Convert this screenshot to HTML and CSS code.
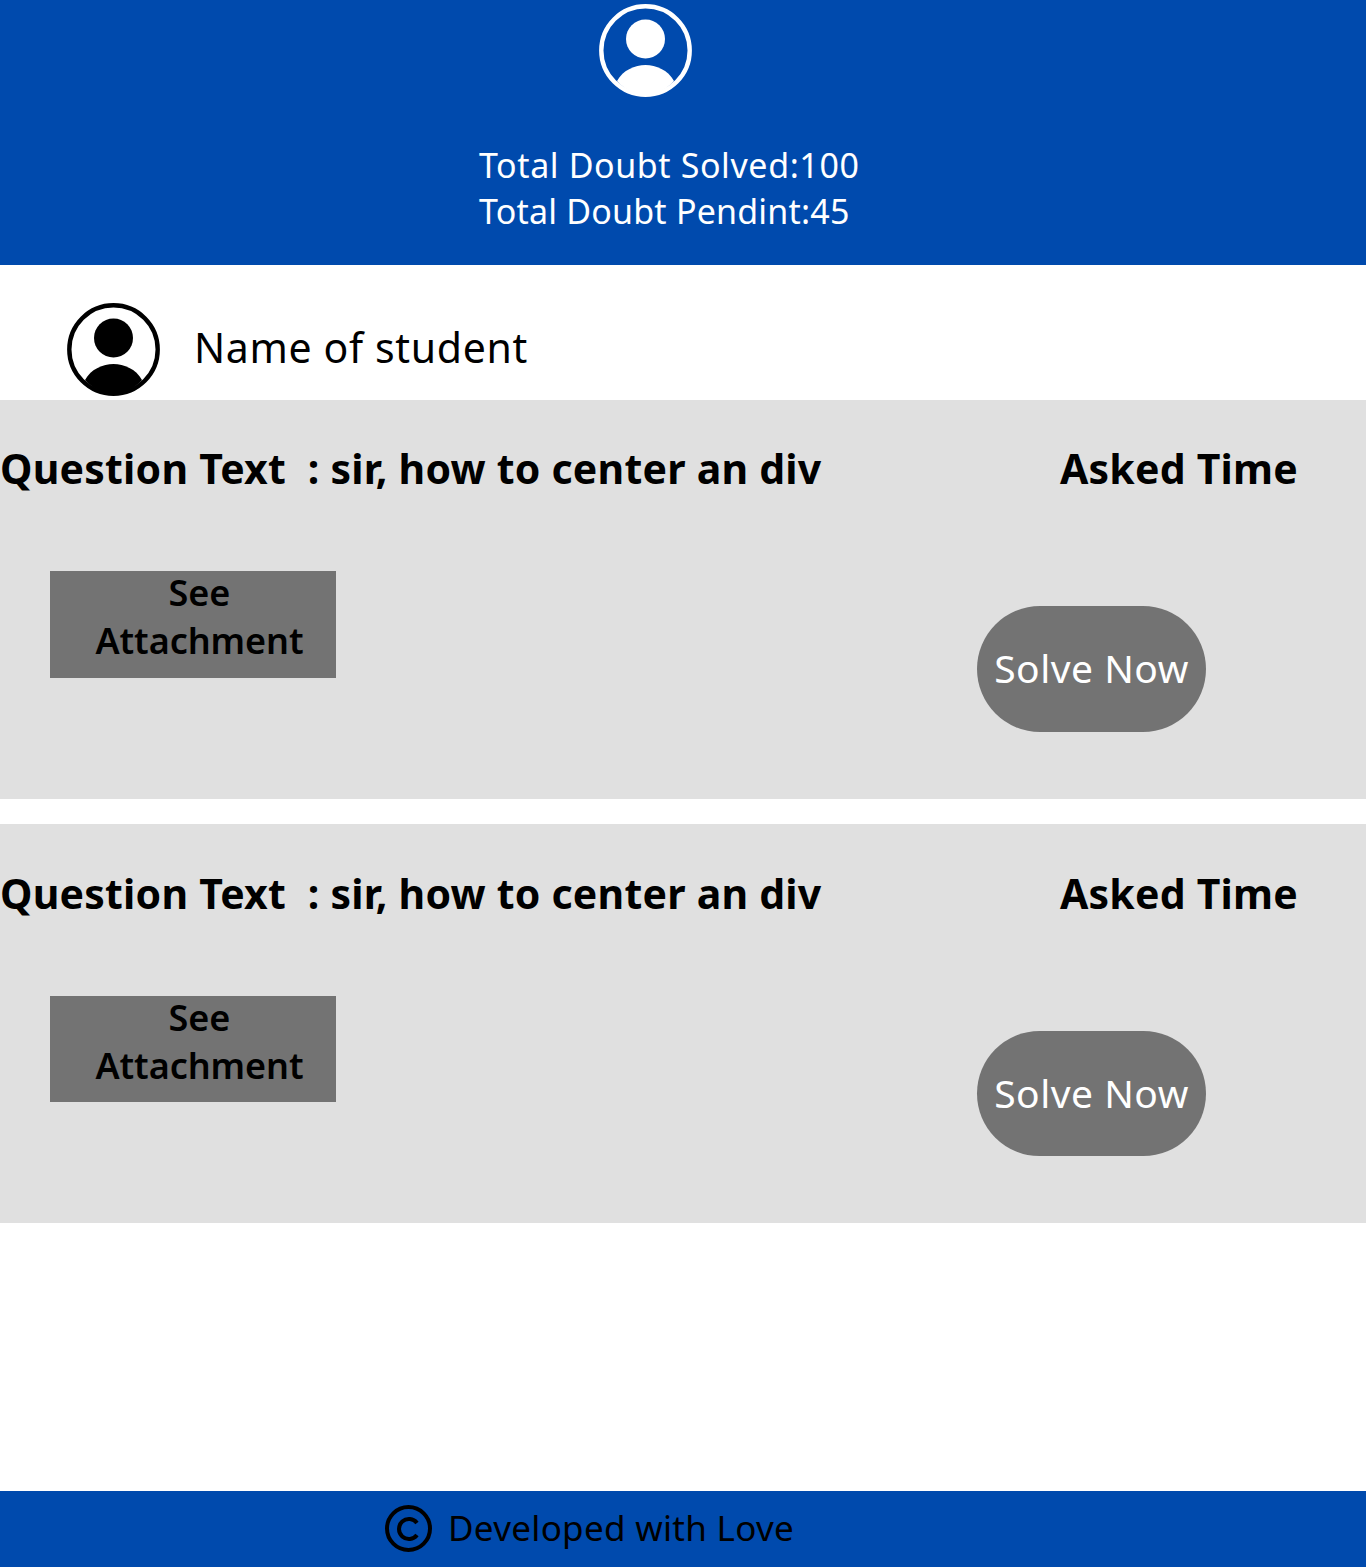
FILE: index.html
```html
<!DOCTYPE html>
<html lang="en">
<head>
    <meta charset="UTF-8">
    <meta name="viewport" content="width=device-width, initial-scale=1.0">
    <title>Doubts</title>
    <link rel="stylesheet" href="styles.css">
</head>
<body>
    <div class="header">
        <svg class="avatar header-avatar" viewBox="0 0 93 93">
            <circle cx="46.5" cy="46.5" r="44.2" fill="none" stroke="currentColor" stroke-width="4.4"/>
            <circle cx="46.5" cy="35" r="19.5" fill="currentColor"/>
            <path d="M18 77C24 66 36 61 46.5 61C57 61 69 66 75 77A37.7 37.7 0 0 1 18 77Z" fill="currentColor"/>
        </svg>
        <div class="stats">
            <div class="stats-solved">Total Doubt Solved:100</div>
            <div class="stats-pending">Total Doubt Pendint:45</div>
        </div>
    </div>

    <div class="student">
        <svg class="avatar" viewBox="0 0 93 93">
            <circle cx="46.5" cy="46.5" r="44.2" fill="none" stroke="currentColor" stroke-width="4.4"/>
            <circle cx="46.5" cy="35" r="19.5" fill="currentColor"/>
            <path d="M18 77C24 66 36 61 46.5 61C57 61 69 66 75 77A37.7 37.7 0 0 1 18 77Z" fill="currentColor"/>
        </svg>
        <span class="student-name">Name of student</span>
    </div>

    <div class="card">
        <div class="card-top">
            <span>Question Text &nbsp;: sir, how to center an div</span>
            <span>Asked Time</span>
        </div>
        <div class="card-actions">
            <div class="attachment"><div class="attachment-label">See<br>Attachment</div></div>
            <div class="solve">Solve Now</div>
        </div>
    </div>

    <div class="card">
        <div class="card-top">
            <span>Question Text &nbsp;: sir, how to center an div</span>
            <span>Asked Time</span>
        </div>
        <div class="card-actions">
            <div class="attachment"><div class="attachment-label">See<br>Attachment</div></div>
            <div class="solve">Solve Now</div>
        </div>
    </div>

    <div class="footer">
        <svg class="copyright" viewBox="0 0 47 47">
            <circle cx="23.5" cy="23.5" r="21.5" fill="none" stroke="currentColor" stroke-width="4"/>
            <path d="M32 18A10 10 0 1 0 32 30" fill="none" stroke="currentColor" stroke-width="4"/>
        </svg>
        <span class="footer-text">Developed with Love</span>
    </div>
</body>
</html>
```

FILE: styles.css
```css
body {
    margin: 0;
    height: 1567px;
    display: flex;
    flex-direction: column;
    font-family: "Noto Sans", sans-serif;
    background-color: #fff;
    color: #000;
    overflow: hidden;
}
.header {
    height: 265px;
    box-sizing: border-box;
    padding-top: 4px;
    background-color: #004aad;
    color: #fff;
}
.avatar {
    display: block;
    width: 93px;
    height: 93px;
    flex: none;
}
.header-avatar {
    margin-left: 599px;
}
.stats {
    margin: 45px 0 0 479px;
    font-size: 34px;
    line-height: 46px;
}
.stats-solved {
    letter-spacing: 0.6px;
}
.stats-pending {
    letter-spacing: 0.2px;
}
.student {
    height: 135px;
    box-sizing: border-box;
    padding: 38px 0 0 67px;
    display: flex;
    gap: 34px;
}
.student-name {
    font-size: 41px;
    line-height: 89px;
    letter-spacing: 0.65px;
}
.card {
    height: 399px;
    box-sizing: border-box;
    margin-bottom: 25px;
    background-color: #e0e0e0;
}
.card + .card {
    padding-top: 1px;
}
.card-top {
    display: flex;
    justify-content: space-between;
    padding: 39px 68px 0 0;
    font-size: 41px;
    font-weight: 700;
    line-height: 58px;
    letter-spacing: 0.23px;
    white-space: pre;
}
.card-actions {
    display: flex;
    justify-content: space-between;
    align-items: flex-start;
    padding: 74px 160px 0 50px;
}
.attachment {
    width: 286px;
    height: 107px;
    padding-left: 13px;
    box-sizing: border-box;
    background-color: #737373;
    text-align: center;
    font-size: 36px;
    font-weight: 600;
    line-height: 48px;
    letter-spacing: -0.05px;
}
.card + .card .attachment {
    height: 106px;
}
.attachment-label {
    margin-top: -2px;
}
.solve {
    width: 229px;
    height: 126px;
    margin-top: 35px;
    border-radius: 63px;
    background-color: #737373;
    color: #fff;
    font-size: 39px;
    line-height: 124px;
    text-align: center;
    letter-spacing: 0.5px;
}
.card + .card .solve {
    height: 125px;
}
.footer {
    margin-top: auto;
    height: 76px;
    box-sizing: border-box;
    padding-left: 385px;
    display: flex;
    align-items: center;
    gap: 16px;
    background-color: #004aad;
    font-size: 35px;
    letter-spacing: 0.3px;
    color: #000;
}
.footer-text {
    margin-bottom: 4px;
}
.copyright {
    width: 47px;
    height: 47px;
    margin-bottom: 2px;
    flex: none;
}
```
